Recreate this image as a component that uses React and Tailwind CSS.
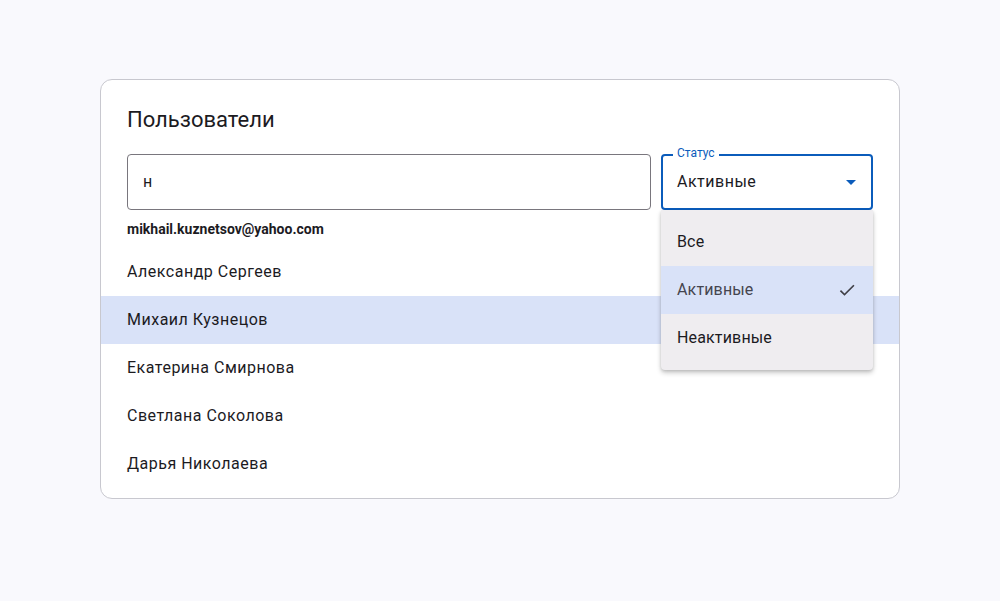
export default function App() {
  const users = [
    "Александр Сергеев",
    "Михаил Кузнецов",
    "Екатерина Смирнова",
    "Светлана Соколова",
    "Дарья Николаева",
  ];
  return (
    <div
      className="min-h-screen bg-[#f9f9fd] flex justify-center pt-[79px]"
      style={{ fontFamily: "Roboto, 'Noto Sans', sans-serif" }}
    >
      <div className="w-[800px] h-[420px] bg-white border border-[#c8c8cf] rounded-[12px]">
        <div className="px-[26px] pt-[24px]">
          <h1 className="text-[22px] leading-[32px] text-[#1c1b1f]">Пользователи</h1>
          <div className="flex gap-[10px] mt-[18px]">
            <div className="flex-1 h-[56px] border border-[#79767d] rounded-[4px] flex items-center px-[15px] text-[16px] tracking-[0.5px] text-[#1c1b1f]">
              н
            </div>
            <div className="relative w-[212px] h-[56px]">
              <div className="h-full border-2 border-[#0b5cbb] rounded-[4px] flex items-center justify-between pl-[14px] pr-[15px]">
                <span className="text-[16px] tracking-[0.5px] text-[#1c1b1f]">Активные</span>
                <svg width="10" height="5" viewBox="0 0 10 5">
                  <path d="M0 0 L10 0 L5 5 Z" fill="#0b5cbb" />
                </svg>
              </div>
              <span className="absolute left-[12px] top-[-8px] bg-white px-[4px] text-[12px] leading-[14px] text-[#0b5cbb]">
                Статус
              </span>
              <div className="absolute left-0 top-full w-[212px] bg-[#efedf0] rounded-b-[4px] py-[8px] shadow-[0_3px_5px_rgba(0,0,0,0.2),0_1px_3px_rgba(0,0,0,0.12)] z-10">
                <div className="h-[48px] flex items-center px-[16px] text-[16px] tracking-[0.15px] text-[#1c1b1f]">Все</div>
                <div className="h-[48px] flex items-center justify-between px-[16px] bg-[#d9e2f8] text-[16px] tracking-[0.15px] text-[#45454f]">
                  <span>Активные</span>
                  <svg width="20" height="20" viewBox="0 0 24 24">
                    <path d="M9 16.17 4.83 12l-1.42 1.41L9 19 21 7l-1.41-1.41z" fill="#3f3f46" />
                  </svg>
                </div>
                <div className="h-[48px] flex items-center px-[16px] text-[16px] tracking-[0.15px] text-[#1c1b1f]">Неактивные</div>
              </div>
            </div>
          </div>
          <div className="mt-[11px] text-[14px] leading-[16px] font-bold text-[#1c1b1f]">
            mikhail.kuznetsov@yahoo.com
          </div>
        </div>
        <div className="mt-[11px]">
          {users.map((u, i) => (
            <div
              key={u}
              className={
                "h-[48px] flex items-center px-[26px] text-[16px] tracking-[0.5px] text-[#1c1b1f] " +
                (i === 1 ? "bg-[#d9e2f8]" : "")
              }
            >
              {u}
            </div>
          ))}
        </div>
      </div>
    </div>
  );
}
